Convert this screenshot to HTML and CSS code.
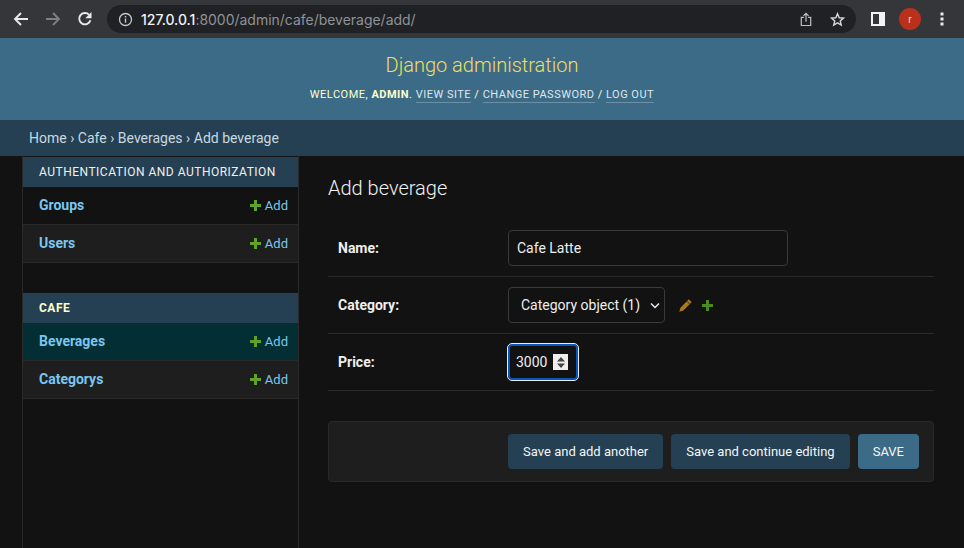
FILE: index.html
```html
<!DOCTYPE html>
<html lang="en">
<head>
    <meta charset="UTF-8">
    <meta name="viewport" content="width=device-width, initial-scale=1.0">
    <title>Add beverage | Django site admin</title>
    <link rel="stylesheet" href="styles.css">
</head>
<body>
    <div class="browser-bar">
        <svg class="nav-icon" width="16" height="16" viewBox="0 0 16 16"><path d="M15 8H2.5M8 2 2 8l6 6" fill="none" stroke="#e8eaed" stroke-width="1.9"/></svg>
        <svg class="nav-icon" width="16" height="16" viewBox="0 0 16 16"><path d="M1 8h12.500M8 2l6 6-6 6" fill="none" stroke="#7d7f83" stroke-width="1.9"/></svg>
        <svg class="nav-icon" width="16" height="16" viewBox="0 0 16 16"><path d="M13.400 9.200A5.700 5.700 0 1 1 12 3.700" fill="none" stroke="#e8eaed" stroke-width="1.900"/><path d="M14.500 1v6.200H8.300z" fill="#e8eaed"/></svg>
        <div class="address">
            <svg width="15" height="15" viewBox="0 0 15 15"><circle cx="7.500" cy="7.500" r="6" fill="none" stroke="#c4c7cb" stroke-width="1.300"/><path d="M7.500 6.600v4.200M7.500 4v1.500" stroke="#c4c7cb" stroke-width="1.400"/></svg>
            <span class="url"><span class="host">127.0.0.1</span>:8000/admin/cafe/beverage/add/</span>
            <svg class="share" width="12" height="15" viewBox="0 0 14 17"><path d="M4.500 6H1.500v9.500h11V6H9.500M7 11V1.500M4 4.300 7 1.300l3 3" fill="none" stroke="#bdc1c6" stroke-width="1.400"/></svg>
            <svg class="star" width="15" height="15" viewBox="0 0 16 16"><path d="m8 1.800 1.800 4.300 4.600.4-3.500 3 1.100 4.500L8 11.600 4 14l1.100-4.500-3.500-3 4.600-.4z" fill="none" stroke="#d5d7da" stroke-width="1.500"/></svg>
        </div>
        <svg class="panel" width="14" height="14" viewBox="0 0 14 14"><path d="M0 0h14v14H0z" fill="#f1f3f4"/><path d="M2 2h6v10H2z" fill="#35363a"/></svg>
        <div class="avatar">r</div>
        <svg class="dots" width="4" height="14" viewBox="0 0 4 14"><path d="M.500.500h3v3h-3zM.500 5.500h3v3h-3zM.500 10.500h3v3h-3z" fill="#e8eaed"/></svg>
    </div>

    <div class="header">
        <div class="branding">Django administration</div>
        <div class="user-tools">
            Welcome, <strong>admin</strong>.
            <a href="#">View site</a> /
            <a href="#">Change password</a> /
            <a href="#">Log out</a>
        </div>
    </div>

    <div class="breadcrumbs">Home › Cafe › Beverages › Add beverage</div>

    <div class="page">
        <div class="sidebar">
            <div class="app-module">
                <div class="caption">Authentication and Authorization</div>
                <div class="model-row">
                    <a class="model-name" href="#">Groups</a>
                    <a class="add-link" href="#"><svg width="11" height="11" viewBox="0 0 11 11"><path d="M4 0h3v4h4v3H7v4H4V7H0V4h4z" fill="#5fa225"/></svg>Add</a>
                </div>
                <div class="model-row alt">
                    <a class="model-name" href="#">Users</a>
                    <a class="add-link" href="#"><svg width="11" height="11" viewBox="0 0 11 11"><path d="M4 0h3v4h4v3H7v4H4V7H0V4h4z" fill="#5fa225"/></svg>Add</a>
                </div>
            </div>
            <div class="app-module">
                <div class="caption current-app">Cafe</div>
                <div class="model-row current">
                    <a class="model-name" href="#">Beverages</a>
                    <a class="add-link" href="#"><svg width="11" height="11" viewBox="0 0 11 11"><path d="M4 0h3v4h4v3H7v4H4V7H0V4h4z" fill="#5fa225"/></svg>Add</a>
                </div>
                <div class="model-row alt">
                    <a class="model-name" href="#">Categorys</a>
                    <a class="add-link" href="#"><svg width="11" height="11" viewBox="0 0 11 11"><path d="M4 0h3v4h4v3H7v4H4V7H0V4h4z" fill="#5fa225"/></svg>Add</a>
                </div>
            </div>
        </div>

        <div class="content">
            <h1>Add beverage</h1>
            <form>
                <div class="form-row">
                    <label for="name">Name:</label>
                    <input class="text-input" type="text" id="name" value="Cafe Latte">
                </div>
                <div class="form-row">
                    <label for="category">Category:</label>
                    <select class="select-input" id="category">
                        <option>Category object (1)</option>
                    </select>
                    <svg class="pencil" width="13" height="13" viewBox="0 0 12 12"><path d="M9 .300 11.700 3 4 10.700.300 11.700 1.300 8z" fill="#a9791c"/><path d="M7.300 2 10 4.700" stroke="#121212" stroke-width=".7"/></svg>
                    <svg class="plus" width="11" height="11" viewBox="0 0 11 11"><path d="M4 0h3v4h4v3H7v4H4V7H0V4h4z" fill="#4b8a1f"/></svg>
                </div>
                <div class="form-row">
                    <label for="price">Price:</label>
                    <div class="number-input">
                        <input type="text" id="price" value="3000">
                        <span class="spinner"><svg width="10" height="13" viewBox="0 0 9 13"><path d="M4.500 1 8.500 5.500H.500zM4.500 12 .500 7.500h8z" fill="#444"/></svg></span>
                    </div>
                </div>
                <div class="submit-row">
                    <button class="btn" type="button">Save and add another</button>
                    <button class="btn" type="button">Save and continue editing</button>
                    <button class="btn default" type="button">SAVE</button>
                </div>
            </form>
        </div>
    </div>
</body>
</html>
```

FILE: styles.css
```css
* {
    box-sizing: border-box;
}

html, body {
    height: 548px;
    overflow: hidden;
}

body {
    margin: 0;
    background-color: #121212;
    color: #eeeeee;
    font-family: Roboto, "Liberation Sans", sans-serif;
    font-size: 14px;
    display: flex;
    flex-direction: column;
}

a {
    text-decoration: none;
}

/* browser toolbar */
.browser-bar {
    height: 38px;
    flex: none;
    background-color: #35363a;
    display: flex;
    align-items: center;
    padding: 0 0 0 13px;
}

.nav-icon {
    margin-right: 16px;
}

.address {
    width: 749px;
    height: 28px;
    margin-left: -2px;
    margin-right: 15px;
    padding: 0 10px 0 11px;
    background-color: #202124;
    border-radius: 14px;
    display: flex;
    align-items: center;
}

.url {
    flex: 1;
    margin-left: 8px;
    font-family: Inter, "Noto Sans", sans-serif;
    font-size: 14px;
    letter-spacing: -0.02px;
    color: #8f9398;
}

.host {
    color: #f1f3f4;
    font-weight: 500;
}

.share {
    margin-right: 18px;
}

.star {
    margin-right: 1px;
}

.panel {
    margin-right: 14px;
}

.avatar {
    width: 22px;
    height: 22px;
    margin-right: 19px;
    border-radius: 50%;
    background-color: #b9301b;
    color: #f5d5cf;
    font-size: 10px;
    display: flex;
    align-items: center;
    justify-content: center;
}

/* django header */
.header {
    height: 82px;
    flex: none;
    background-color: #3c6b87;
    text-align: center;
    padding-top: 15px;
}

.branding {
    font-size: 20px;
    font-weight: 300;
    line-height: 24px;
    color: #f5dd5d;
}

.user-tools {
    margin-top: 11px;
    font-size: 11px;
    line-height: 14px;
    letter-spacing: 0.5px;
    text-transform: uppercase;
    color: #ffffcc;
}

.user-tools a {
    color: #dfe7ec;
    border-bottom: 1px solid rgba(255, 255, 255, 0.25);
    padding-bottom: 1px;
}

.breadcrumbs {
    height: 36px;
    flex: none;
    background-color: #244052;
    color: #c9d8e0;
    line-height: 36px;
    padding-left: 29px;
}

/* sidebar */
.page {
    flex: 1;
    display: flex;
    min-height: 0;
}

.sidebar {
    width: 277px;
    margin-left: 22px;
    padding-top: 1px;
    border-left: 1px solid #2a2a2a;
    border-right: 1px solid #2a2a2a;
    flex: none;
}

.app-module {
    margin-bottom: 30px;
}

.caption {
    height: 30px;
    line-height: 30px;
    padding-left: 16px;
    background-color: #244052;
    color: #f0f0f0;
    font-size: 12px;
    letter-spacing: 0.5px;
    text-transform: uppercase;
}

.current-app {
    color: #ffffcc;
    font-weight: 700;
}

.model-row {
    height: 38px;
    padding: 0 10px 1px 16px;
    border-bottom: 1px solid #2a2a2a;
    display: flex;
    align-items: center;
    justify-content: space-between;
}

.model-row.alt {
    background-color: #1e1e1e;
}

.model-row.current {
    background-color: #032e33;
}

.model-name {
    color: #79c7f0;
    font-weight: 700;
    font-size: 14px;
}

.add-link {
    color: #79c7f0;
    font-size: 13px;
    display: flex;
    align-items: center;
    gap: 4px;
}

/* form */
.content {
    flex: 1;
    padding: 20px 30px 0 29px;
}

h1 {
    margin: 0 0 20px;
    font-size: 20px;
    font-weight: 300;
    line-height: 24px;
    color: #f0f0f0;
}

.form-row {
    height: 57px;
    padding-left: 10px;
    border-bottom: 1px solid #2a2a2a;
    display: flex;
    align-items: center;
}

label {
    width: 170px;
    flex: none;
    font-weight: 700;
    color: #eeeeee;
}

.text-input, .select-input {
    height: 36px;
    background-color: #121212;
    border: 1px solid #3a3a3a;
    border-radius: 4px;
    color: #eeeeee;
    font-family: inherit;
    font-size: 14px;
}

.text-input {
    width: 280px;
    padding: 0 8px;
}

.select-input {
    width: 157px;
    padding: 0 0 0 12px;
    appearance: none;
    background-image: url("data:image/svg+xml,%3Csvg xmlns='http://www.w3.org/2000/svg' width='10' height='7'%3E%3Cpath d='M1 1.500 5 5.500 9 1.500' fill='none' stroke='%23eee' stroke-width='1.500'/%3E%3C/svg%3E");
    background-repeat: no-repeat;
    background-position: right 4px center;
}

.pencil {
    margin-left: 14px;
}

.plus {
    margin-left: 10px;
}

/* focused field: white rim, blue ring */
.number-input {
    width: 72px;
    height: 38px;
    margin-left: -1px;
    padding: 0 7px;
    background-color: #121212;
    border: 1px solid #e8eef8;
    border-radius: 5px;
    box-shadow: inset 0 0 0 2px #0a55ba;
    display: flex;
    align-items: center;
}

.number-input input {
    width: 34px;
    margin-left: 1px;
    padding: 0;
    background: none;
    border: none;
    outline: none;
    color: #eeeeee;
    font-family: inherit;
    font-size: 14px;
}

.spinner {
    width: 15px;
    height: 16px;
    margin-left: 3px;
    flex: none;
    background-color: #efefef;
    display: flex;
    align-items: center;
    justify-content: center;
}

.submit-row {
    height: 61px;
    margin-top: 30px;
    padding: 12px 14px 12px 15px;
    background-color: #1e1e1e;
    border: 1px solid #2a2a2a;
    border-radius: 4px;
    display: flex;
    justify-content: flex-end;
    gap: 8px;
}

.btn {
    height: 35px;
    padding: 0 15px;
    background-color: #244052;
    border: none;
    border-radius: 4px;
    color: #f5f5f5;
    font-family: inherit;
    font-size: 13px;
}

.btn.default {
    background-color: #3c6b87;
}
```
